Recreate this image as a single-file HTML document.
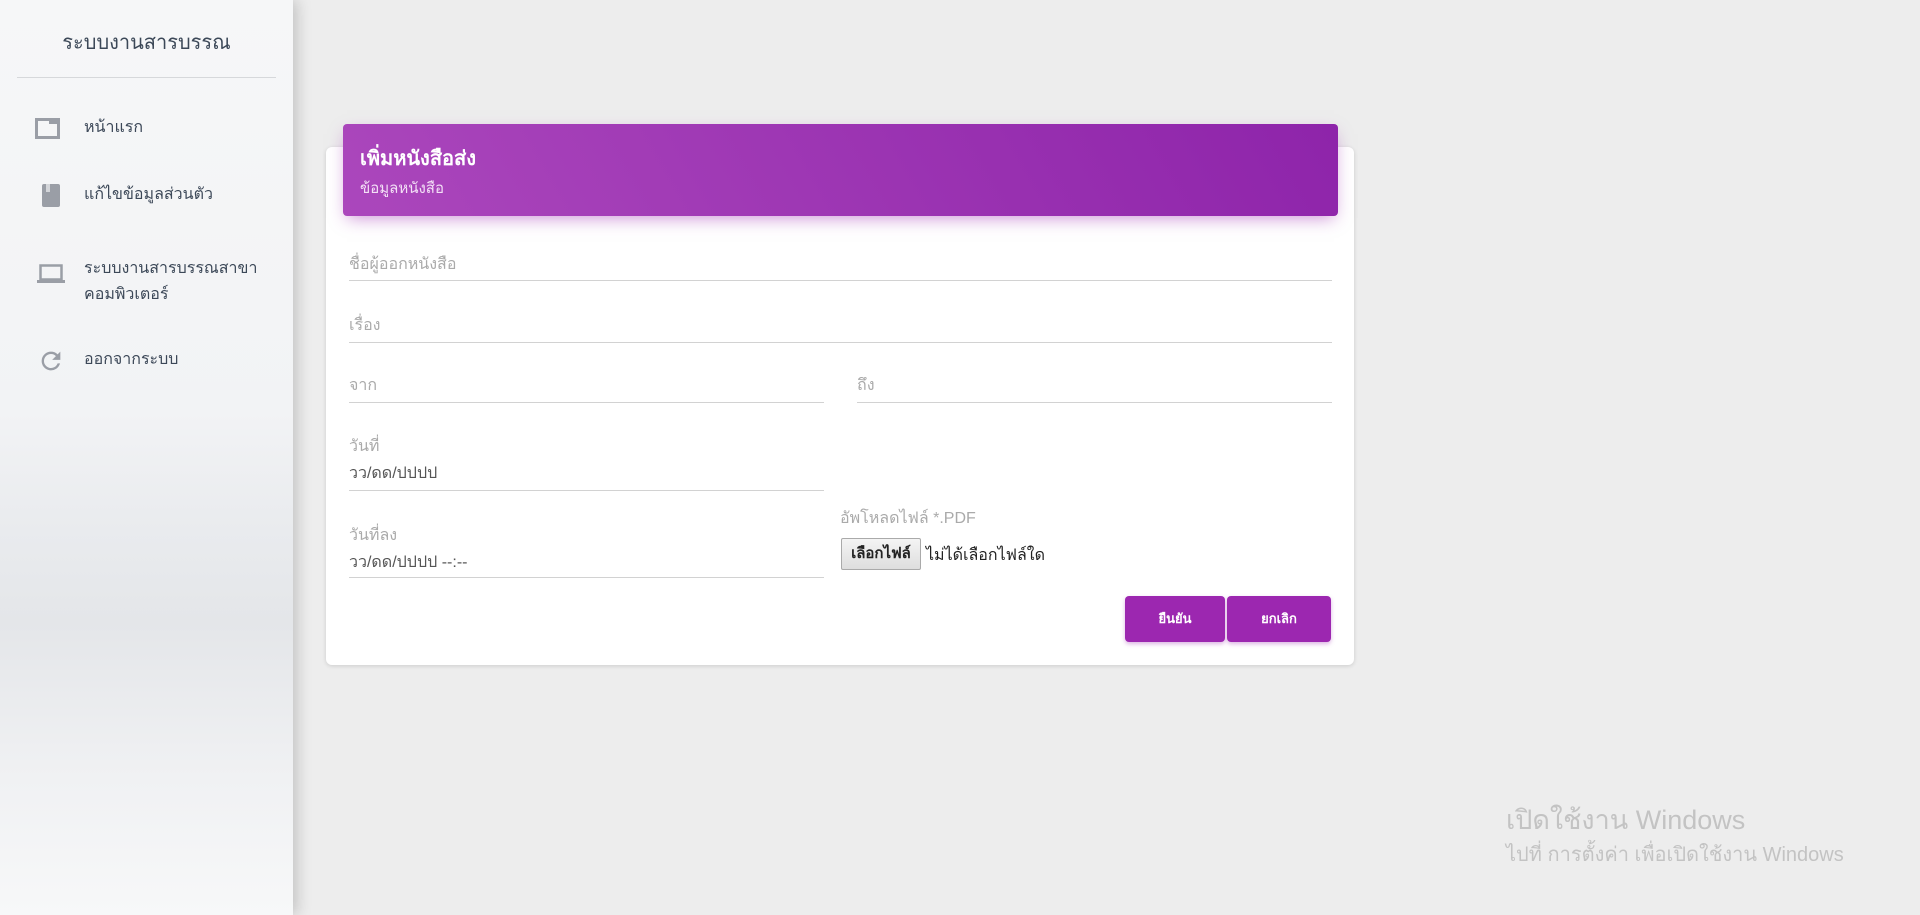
<!DOCTYPE html>
<html><head><meta charset="utf-8"><style>
*{box-sizing:border-box;margin:0;padding:0}
body{width:1920px;height:915px;overflow:hidden;background:#ededed;font-family:"Liberation Sans","Noto Sans CJK SC",sans-serif;position:relative}
.sb{position:absolute;left:0;top:0;width:293px;height:915px;background:linear-gradient(180deg,#f6f7f8 0%,#f2f3f5 45%,#e9ebee 58%,#e4e6e9 68%,#f0f1f3 85%,#f7f8f9 100%);box-shadow:4px 0 14px rgba(0,0,0,.18)}
.sb .t{position:absolute;left:0;width:293px;top:26px;text-align:center;font-size:20px;color:#3c4858}
.sb .sep{position:absolute;left:17px;width:259px;top:77px;border-top:1px solid #d6d8db}
.mi{position:absolute;left:84px;font-size:16px;color:#3c4858;line-height:26px}
.ic{position:absolute}
.card{position:absolute;left:326px;top:147px;width:1028px;height:518px;background:#fff;border-radius:6px;box-shadow:0 1px 4px rgba(0,0,0,.14)}
.hd{position:absolute;left:343px;top:124px;width:995px;height:92px;border-radius:4px;background:linear-gradient(60deg,#ab47bc,#8e24aa);box-shadow:0 6px 16px -4px rgba(156,39,176,.5)}
.hd .a{position:absolute;left:17px;top:18px;color:#fff;font-size:20px;font-weight:bold}
.hd .b{position:absolute;left:17px;top:52px;color:#f3e0f6;font-size:15px}
.lab{position:absolute;font-size:16px;color:#aaa}
.ln{position:absolute;border-top:1px solid #d2d2d2;height:0}
.val{position:absolute;font-size:16px;color:#555}
.btn{position:absolute;top:596px;height:46px;background:#9c27b0;border-radius:4px;color:#fff;font-size:13px;font-weight:bold;text-align:center;line-height:46px;box-shadow:0 2px 4px rgba(156,39,176,.35)}
.wm{position:absolute;left:1506px;color:#c3c3c3}
</style></head><body>
<div class="sb">
<div class="t">ระบบงานสารบรรณ</div>
<div class="sep"></div>
<svg class="ic" style="left:35px;top:118px" width="25" height="21" viewBox="0 0 25 21"><rect x="1.5" y="1.5" width="22" height="18" fill="none" stroke="#9a9ea6" stroke-width="3"/><rect x="14" y="1" width="10" height="5" fill="#9a9ea6"/></svg>
<div class="mi" style="top:115px">หน้าแรก</div>
<svg class="ic" style="left:42px;top:184px" width="18" height="23"><rect width="18" height="23" rx="2" fill="#9a9ea6"/><rect x="4" y="0" width="4" height="8" fill="#d4d6da"/></svg>
<div class="mi" style="top:182px">แก้ไขข้อมูลส่วนตัว</div>
<svg class="ic" style="left:37px;top:264px" width="28" height="19"><rect x="3.5" y="1.5" width="21" height="14" fill="none" stroke="#9a9ea6" stroke-width="2.5"/><rect x="0" y="16" width="28" height="3" fill="#9a9ea6"/></svg>
<div class="mi" style="top:256px">ระบบงานสารบรรณสาขา<br>คอมพิวเตอร์</div>
<svg class="ic" style="left:37px;top:347px" width="28" height="28" viewBox="0 0 24 24"><path d="M17.65 6.35A7.96 7.96 0 0 0 12 4a8 8 0 1 0 7.73 10h-2.08A6 6 0 1 1 12 6c1.66 0 3.14.69 4.22 1.78L13 11h7V4l-2.35 2.35z" fill="#9a9ea6"/></svg>
<div class="mi" style="top:347px">ออกจากระบบ</div>
</div>
<div class="card"></div>
<div class="hd"><div class="a">เพิ่มหนังสือส่ง</div><div class="b">ข้อมูลหนังสือ</div></div>
<div class="lab" style="left:349px;top:252px">ชื่อผู้ออกหนังสือ</div><div class="ln" style="left:349px;width:983px;top:280px"></div>
<div class="lab" style="left:349px;top:313px">เรื่อง</div><div class="ln" style="left:349px;width:983px;top:342px"></div>
<div class="lab" style="left:349px;top:373px">จาก</div><div class="ln" style="left:349px;width:475px;top:402px"></div>
<div class="lab" style="left:857px;top:373px">ถึง</div><div class="ln" style="left:857px;width:475px;top:402px"></div>
<div class="lab" style="left:349px;top:434px">วันที่</div><div class="val" style="left:349px;top:461px">วว/ดด/ปปปป</div><div class="ln" style="left:349px;width:475px;top:490px"></div>
<div class="lab" style="left:349px;top:523px">วันที่ลง</div><div class="val" style="left:349px;top:550px">วว/ดด/ปปปป --:--</div><div class="ln" style="left:349px;width:475px;top:577px"></div>
<div class="lab" style="left:840px;top:506px">อัพโหลดไฟล์ *.PDF</div>
<div style="position:absolute;left:841px;top:538px;width:80px;height:32px;border:1px solid #aaa;border-radius:2px;background:linear-gradient(#f4f4f4,#dedede);font-size:15px;font-weight:bold;color:#222;text-align:center;line-height:30px">เลือกไฟล์</div>
<div class="val" style="left:926px;top:543px;color:#222">ไม่ได้เลือกไฟล์ใด</div>
<div class="btn" style="left:1125px;width:100px">ยืนยัน</div>
<div class="btn" style="left:1227px;width:104px">ยกเลิก</div>
<div class="wm" style="top:798px;font-size:27px">เปิดใช้งาน Windows</div>
<div class="wm" style="top:838px;font-size:20px">ไปที่ การตั้งค่า เพื่อเปิดใช้งาน Windows</div>
</body></html>
